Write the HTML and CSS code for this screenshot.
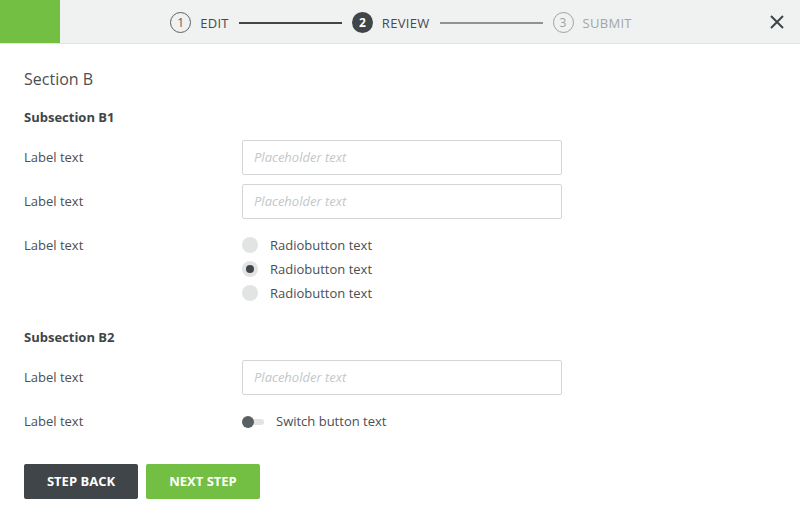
FILE: index.html
```html
<!DOCTYPE html>
<html>
<head>
<meta charset="utf-8">
<link rel="stylesheet" href="styles.css">
</head>
<body>
<header class="topbar">
  <div class="brand"></div>
  <nav class="steps">
    <div class="step done"><span class="num">1</span><span class="step-label">EDIT</span></div>
    <div class="line dark"></div>
    <div class="step current"><span class="num">2</span><span class="step-label">REVIEW</span></div>
    <div class="line light"></div>
    <div class="step todo"><span class="num">3</span><span class="step-label">SUBMIT</span></div>
  </nav>
  <div class="close-wrap">
    <svg class="close" width="14" height="14" viewBox="0 0 14 14"><path d="M1 1 L13 13 M13 1 L1 13" stroke="#3f4549" stroke-width="2" fill="none"/></svg>
  </div>
</header>
<main class="content">
  <h1 class="section-title">Section B</h1>
  <h2 class="subsection">Subsection B1</h2>
  <div class="row">
    <label class="label">Label text</label>
    <input class="field" type="text" placeholder="Placeholder text">
  </div>
  <div class="row">
    <label class="label">Label text</label>
    <input class="field" type="text" placeholder="Placeholder text">
  </div>
  <div class="row radio-row">
    <label class="label">Label text</label>
    <div class="radios">
      <div class="radio"><span class="dot"></span>Radiobutton text</div>
      <div class="radio checked"><span class="dot"></span>Radiobutton text</div>
      <div class="radio"><span class="dot"></span>Radiobutton text</div>
    </div>
  </div>
  <h2 class="subsection second">Subsection B2</h2>
  <div class="row">
    <label class="label">Label text</label>
    <input class="field" type="text" placeholder="Placeholder text">
  </div>
  <div class="row">
    <label class="label">Label text</label>
    <div class="switch"><span class="track"><span class="knob"></span></span>Switch button text</div>
  </div>
  <div class="actions">
    <button class="btn back">STEP BACK</button>
    <button class="btn next">NEXT STEP</button>
  </div>
</main>
</body>
</html>
```
FILE: styles.css
```css
* { box-sizing: border-box; }
html, body { margin: 0; padding: 0; background: #fff; }
body {
  font-family: "Open Sans", "Liberation Sans", sans-serif;
  font-size: 13px;
  color: #4a4f53;
}
.topbar {
  display: grid;
  grid-template-columns: 60px 1fr 60px;
  height: 44px;
  background: #f0f1f1;
  border-bottom: 1px solid #e1e2e2;
}
.brand { background: #72bf44; height: 43px; }
.steps {
  display: flex;
  align-items: center;
  justify-content: center;
  height: 43px;
  padding-top: 2px;
  padding-left: 2px;
}
.step { display: flex; align-items: center; }
.num {
  width: 21px; height: 21px;
  border-radius: 50%;
  display: flex; align-items: center; justify-content: center;
  font-size: 12px;
  margin-right: 9px;
}
.step.done .num { border: 1px solid #5c6166; color: #5c6166; }
.step.current .num { background: #3f4549; color: #fff; font-weight: 700; }
.step.todo .num { border: 1px solid #9ea2a5; color: #9ea2a5; }
.step-label { font-size: 13px; letter-spacing: 0.3px; color: #444a4e; }
.step.todo .step-label { color: #a2a6a8; }
.line { height: 2px; width: 103px; margin: 0 10px 0 10px; }
.line.dark { background: #3f4549; }
.line.light { background: #8e9396; }
.close-wrap {
  display: flex; align-items: center; justify-content: flex-end;
  padding-right: 16px;
  padding-top: 1px;
}
.content { padding: 24px 24px 0 24px; }
.section-title {
  margin: 0;
  font-size: 16px;
  font-weight: 400;
  line-height: 22px;
  color: #4a4f53;
}
.subsection {
  margin: 17px 0 0 0;
  font-size: 13px;
  font-weight: 700;
  line-height: 20px;
  color: #3f4549;
}
.subsection.second { margin-top: 22px; }
.row {
  display: flex;
  align-items: center;
  min-height: 35px;
  margin-top: 9px;
}
.row .label { line-height: 33px; }
.subsection + .row { margin-top: 13px; }
.label { width: 218px; flex: none; color: #4a4f53; }
.field {
  width: 320px;
  height: 35px;
  border: 1px solid #d3d5d6;
  border-radius: 2px;
  padding: 0 11px 2px 11px;
  font-family: "Open Sans", "Liberation Sans", sans-serif;
  font-size: 13px;
  outline: none;
}
.field::placeholder { color: #c4c7c8; font-style: italic; }
.radio-row { align-items: flex-start; margin-top: 14px; }
.radio-row .label { line-height: 24px; }
.radios { display: flex; flex-direction: column; }
.radio { display: flex; align-items: center; line-height: 24px; height: 24px; }
.dot {
  width: 16px; height: 16px; border-radius: 50%;
  background: #e2e3e3;
  margin-right: 12px;
  display: flex; align-items: center; justify-content: center;
}
.radio.checked .dot::after {
  content: "";
  width: 8px; height: 8px; border-radius: 50%;
  background: #3f4549;
}
.switch { display: flex; align-items: center; line-height: 33px; }
.track {
  position: relative;
  width: 22px; height: 12px;
  margin-right: 12px;
  display: flex; align-items: center;
}
.track::before {
  content: "";
  position: absolute; left: 6px; right: 0; top: 3px;
  height: 6px; border-radius: 3px;
  background: #e2e3e3;
}
.knob {
  position: relative;
  width: 12px; height: 12px; border-radius: 50%;
  background: #5a5f63;
}
.actions { display: flex; gap: 8px; margin-top: 25px; }
.btn {
  width: 114px; height: 35px;
  border: none; border-radius: 2px;
  padding: 0 0 2px 0;
  color: #fff;
  font-family: "Open Sans", "Liberation Sans", sans-serif;
  font-weight: 700;
  font-size: 13px;
}
.btn.back { background: #3f4549; }
.btn.next { background: #72bf44; }
```
